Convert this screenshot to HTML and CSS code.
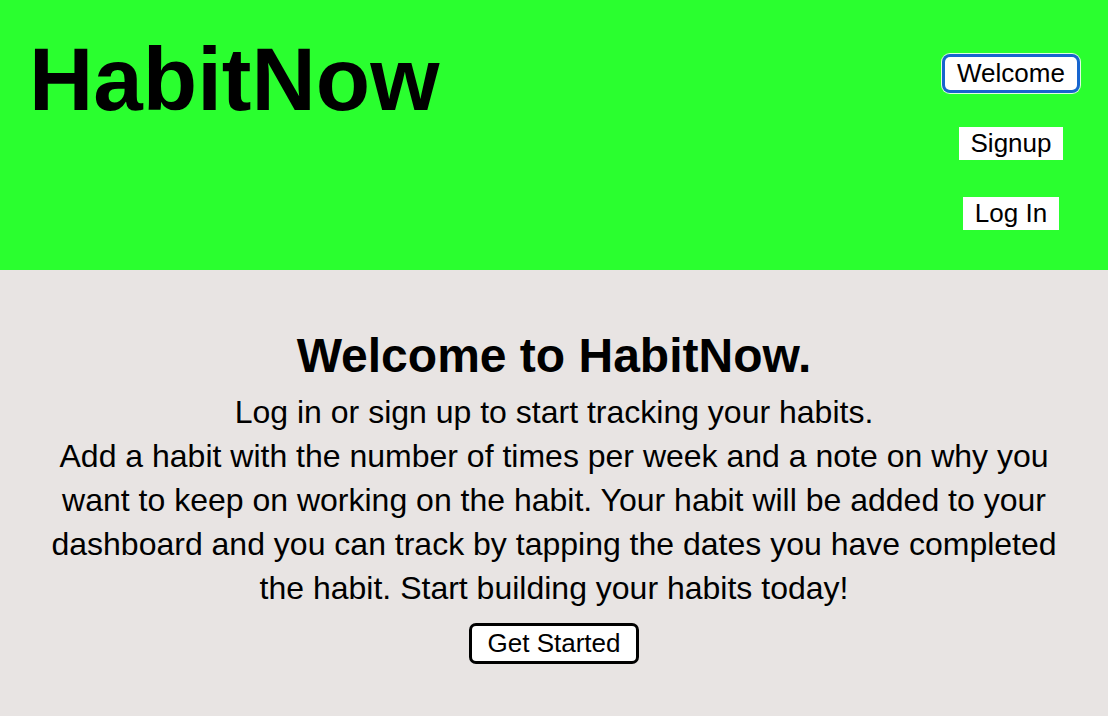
FILE: index.html
```html
<!DOCTYPE html>
<html lang="en">
<head>
<meta charset="utf-8">
<title>HabitNow</title>
<link rel="stylesheet" href="styles.css">
</head>
<body>
<header class="top">
  <h1 class="brand">HabitNow</h1>
  <nav class="nav">
    <button class="nav-btn nav-btn--focus">Welcome</button>
    <button class="nav-btn">Signup</button>
    <button class="nav-btn">Log In</button>
  </nav>
</header>
<main class="main">
  <h2 class="title">Welcome to HabitNow.</h2>
  <p class="lead">Log in or sign up to start tracking your habits.<br>Add a habit with the number of times per week and a note on why you want to keep on working on the habit. Your habit will be added to your dashboard and you can track by tapping the dates you have completed the habit. Start building your habits today!</p>
  <button class="start-btn">Get Started</button>
</main>
</body>
</html>
```

FILE: styles.css
```css
* { box-sizing: border-box; }
html, body {
  margin: 0;
  padding: 0;
  height: 100%;
}
body {
  font-family: "Liberation Sans", Arial, Helvetica, sans-serif;
  color: #000;
  background: #e8e4e3;
  display: flex;
  flex-direction: column;
}
.top {
  background: #2aff2f;
  height: 270px;
  display: flex;
  justify-content: space-between;
  align-items: flex-start;
  padding: 0 31px 0 29px;
}
.brand {
  margin: 35px 0 0;
  font-size: 89px;
  line-height: 1;
  font-weight: bold;
}
.nav {
  margin-top: 57px;
  display: flex;
  flex-direction: column;
  align-items: center;
  gap: 37px;
  width: 132px;
}
.nav-btn {
  font-family: inherit;
  font-size: 26px;
  line-height: 31px;
  padding: 1px 12px;
  border: none;
  background: #fff;
  color: #000;
  cursor: pointer;
}
.nav-btn--focus {
  border-radius: 5px;
  box-shadow: 0 0 0 3px #1765cf, 0 0 0 4px rgba(255,255,255,0.85);
}
.main {
  flex: 1;
  display: flex;
  flex-direction: column;
  align-items: center;
  padding: 0 45px;
  text-align: center;
}
.title {
  margin: 58px 0 0;
  font-size: 48px;
  font-weight: bold;
}
.lead {
  margin: 7px 0 0;
  font-size: 32px;
  line-height: 44px;
}
.start-btn {
  margin-top: 13px;
  font-family: inherit;
  font-size: 26px;
  line-height: 31px;
  padding: 2px 16px;
  border: 3px solid #000;
  border-radius: 7px;
  background: #fff;
  color: #000;
  cursor: pointer;
}
```
